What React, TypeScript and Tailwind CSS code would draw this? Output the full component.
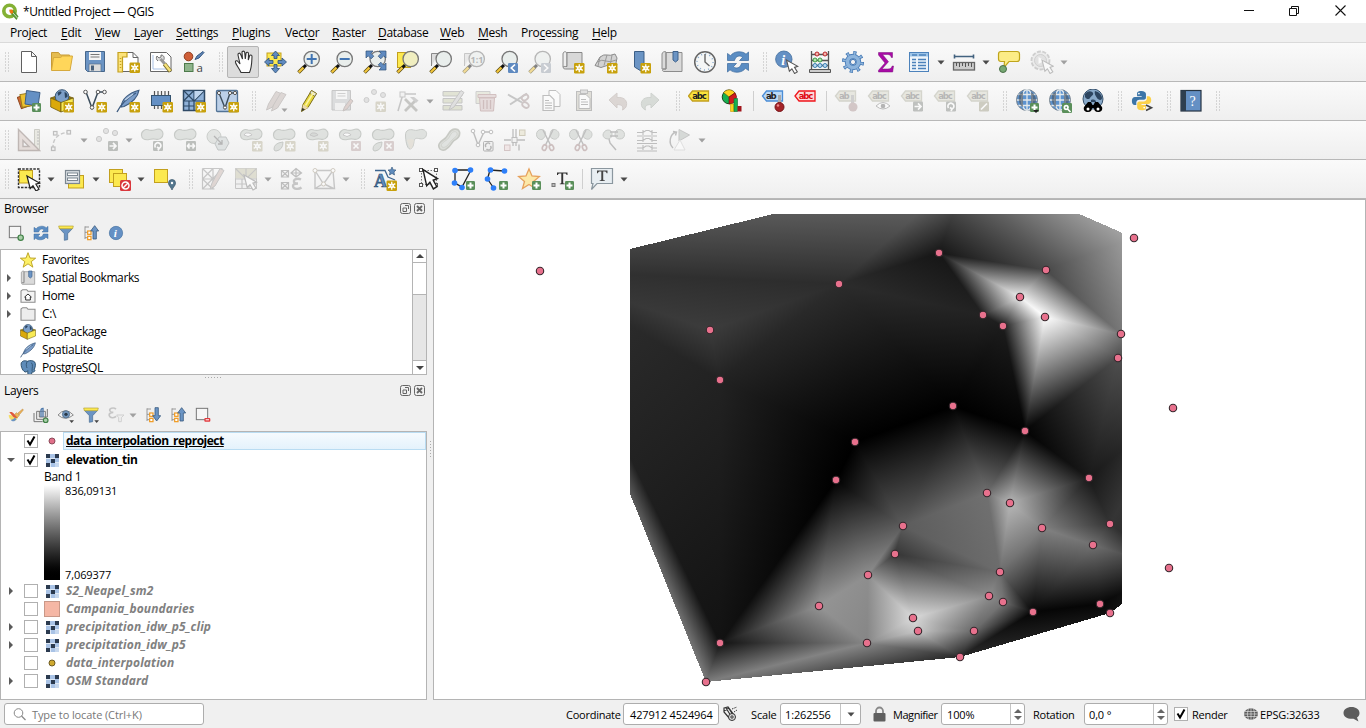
import React from "react";

/* ---------- shared icon parts ---------- */

const Star = ({ x = 13, y = 13, dim = false }: { x?: number; y?: number; dim?: boolean }) => (
  <g>
    <rect x={x} y={y} width="10.500" height="10.500" rx="1.200" fill={dim ? "#bdb8a0" : "#c8a10c"} />
    <g stroke="#fff" strokeWidth="1.300">
      <path d={`M${x + 5.25} ${y + 1.2}v8.100M${x + 1.7} ${y + 3.1}l7.100 4.300M${x + 8.8} ${y + 3.1}l-7.100 4.300`} />
    </g>
    <circle cx={x + 5.25} cy={y + 5.25} r="2.300" fill="#fff" />
    <circle cx={x + 5.25} cy={y + 5.25} r="1" fill={dim ? "#ddd" : "#ecd98a"} />
  </g>
);

const Plus = ({ x = 14, y = 14 }: { x?: number; y?: number }) => (
  <g>
    <rect x={x} y={y} width="9" height="9" rx="1.2" fill="#5a8f5a" />
    <path d={`M${x + 4.5} ${y + 1.5}v6M${x + 1.5} ${y + 4.5}h6`} stroke="#fff" strokeWidth="2" />
  </g>
);

const Badge = ({ d, x = 13, y = 13, fill = "#9b9e9b" }: { d: string; x?: number; y?: number; fill?: string }) => (
  <g>
    <rect x={x} y={y} width="10" height="10" rx="1.2" fill={fill} />
    <path d={d} transform={`translate(${x} ${y})`} stroke="#fff" strokeWidth="1.7" fill="none" />
  </g>
);

const Lens = ({ back, children, glass = "#e9eeec" }: { back?: React.ReactNode; children?: React.ReactNode; glass?: string }) => (
  <g>
    {back}
    <path d="M1.5 22.500L7 17" stroke="#57480f" strokeWidth="3.6" />
    <path d="M1.800 22.200L6.500 17.500" stroke="#f3c63c" strokeWidth="2.2" />
    <path d="M6.600 17.400L9 15" stroke="#111" strokeWidth="3" />
    <circle cx="14.700" cy="9" r="7.700" fill={glass} stroke="#777" strokeWidth="1.300" />
    {children}
  </g>
);

const Dim = ({ children }: { children: React.ReactNode }) => <g opacity="0.5">{children}</g>;

const Globe = () => (
  <g>
    <circle cx="12" cy="11" r="10.500" fill="#5d93cf" stroke="#77828c" />
    <path d="M12 .8v20.400M1.800 11h20.400M3.500 5.500h17M3.500 16.500h17" stroke="#e4e9ec" strokeWidth="1.300" fill="none" />
    <ellipse cx="12" cy="11" rx="5.300" ry="10.300" fill="none" stroke="#e4e9ec" strokeWidth="1.300" />
    <path d="M4 6c1-2 3-3 4-3v15c-3-1-5-6-4-12zM16 3c3 1 5 5 5 8s-2 6-5 7z" fill="#46505a" opacity=".6" />
  </g>
);

const Blob = ({ fill = "#c9cec9" }: { fill?: string }) => (
  <path
    d="M1.500 7.500C1 3.500 5 .5 9 2c3 1 5 0 8-.7 4-.8 6 2 6 4.700 0 4-4 6-7 5.200-4-1-5 .4-8 .6-3.500.2-6-.8-6.500-4.300z"
    fill={fill}
    stroke="#9aa09a"
    strokeWidth="1.100"
  />
);

const Tag = ({ t, fill, stroke, color = "#222" }: { t: string; fill: string; stroke: string; color?: string }) => (
  <g>
    <path d="M1.500 7L5.500 2H21.500V12H5.500z" fill={fill} stroke={stroke} strokeWidth="1.300" />
    <text x={t === "ab" ? 5 : 5.300} y="10" fontSize="8.500" fontWeight="700" fontFamily="DejaVu Sans, Open Sans, sans-serif" fill={color} textLength={t === "ab" ? 10.500 : 14.500}>
      {t}
    </text>
  </g>
);

const Feather = () => (
  <g>
    <path d="M5 18C6 10 13 4 23 1.200 22 7 17 13.500 8 17.500z" fill="#7b9dc9" stroke="#3e5c80" strokeWidth="1.100" />
    <path d="M1 23C4 17 11 9 20 4" stroke="#3e5c80" fill="none" strokeWidth="1.400" />
    <path d="M9 11l8-6" stroke="#c3d5ea" strokeWidth="1.200" />
  </g>
);

const Package = () => (
  <g>
    <path d="M.7 9L12 5l11.300 4L11 13.500z" fill="#9b7c0e" stroke="#6e5b0c" strokeWidth=".8" />
    <circle cx="12" cy="7.500" r="6.800" fill="#7c9fc8" stroke="#3a5876" />
    <path d="M7.500 4c1.500-2 4-2 4-.5s-2 2-3 3.500zM14.500 3c2.500.5 3.500 3 3 5l-2.500 1z" fill="#2c4560" />
    <path d="M.7 9L11 13.500V23L.7 18z" fill="#dba90a" stroke="#6e5b0c" strokeWidth=".8" />
    <path d="M11 13.500L23.300 9v9L11 23z" fill="#f8ea55" stroke="#6e5b0c" strokeWidth=".8" />
  </g>
);

const Refresh = () => (
  <g fill="#5b8dc3" stroke="#3a699c" strokeWidth=".7">
    <path d="M1.500 10.500V3.500l3 2.200C8 1 16 .5 20 4.200L22.500 2v8.500h-9l3-3C14 4.700 9.500 6 8.500 10.500z" />
    <path d="M22.500 13.500v7l-3-2.200C16 23 8 23.500 4 19.800L1.500 22v-8.500h9l-3 3c2.500 2.800 7 1.500 8-3z" />
  </g>
);

const Arrow = ({ x = 2, y = 2, fill = "#fff", stroke = "#222" }: { x?: number; y?: number; fill?: string; stroke?: string }) => (
  <path
    transform={`translate(${x} ${y})`}
    d="M0 0L3.200 12.500 6 9.800l3 5.200 3-1.800-3.100-5L12.500 7z"
    fill={fill}
    stroke={stroke}
    strokeWidth="1.200"
  />
);

const BookmarkBook = () => (
  <g>
    <path d="M2 4c0-2 3-3 4-2v17H2zM6 2.500h16V21.500H4c-2 0-2-2.500 0-2.500h2z" fill="#dadada" stroke="#8c8c8c" />
    <path d="M13 1.500h5V10l-2.500 2L13 10z" fill="#6b94c4" stroke="#3e628c" />
  </g>
);

const InfoDisc = () => (
  <g>
    <circle cx="11" cy="11" r="10" fill="#6490c4" stroke="#44709f" />
    <text x="7.800" y="17.500" fontSize="17" fontStyle="italic" fontWeight="700" fontFamily="Liberation Serif, serif" fill="#fff">
      i
    </text>
  </g>
);

const Tree = ({ down = false }: { down?: boolean }) => (
  <g>
    <path d="M3 2v19M3 3h6M3 11h4M3 19h4" stroke="#8c8c8c" strokeWidth="1.300" fill="none" />
    <rect x="7" y="9" width="5" height="5" fill="#fff" stroke="#f09a20" strokeWidth="1.800" />
    <rect x="7" y="17" width="5" height="5" fill="#fff" stroke="#f09a20" strokeWidth="1.800" />
    <path d={down ? "M15 1h5v12h3.500L17.500 21 11.500 13H15z" : "M15 21h5V9h3.500L17.500 1 11.500 9H15z"} fill="#6b94c4" stroke="#38597e" strokeWidth="1.200" />
  </g>
);

const Filter = () => (
  <g>
    <path d="M2 5h20l-7.500 8v9l-5 1v-10z" fill="#6b94c4" stroke="#46698f" />
    <path d="M1 1.500h22l-1 4H2z" fill="#fce94f" stroke="#b3a238" />
  </g>
);

const Scissors = () => (
  <g>
    <path d="M5 1.500c3 0 5 2 4.500 5s-3 5.500-5 5-4-2-4-5 2-5 4.500-5zM17 1.500c3-.5 6 2 6 5s-3 5.500-5.500 4.500-4-2-3.500-4.500 1-4.700 3-5z" fill="#c6cbc6" stroke="#9ba09b" />
    <path d="M7 2l8 16M17 2L9 18" stroke="#8a8a8a" strokeWidth="1.400" />
    <ellipse cx="8.500" cy="19.500" rx="2" ry="3" transform="rotate(20 8.500 19.500)" fill="none" stroke="#a98d8d" strokeWidth="1.700" />
    <ellipse cx="15.500" cy="19.500" rx="2" ry="3" transform="rotate(-20 15.500 19.500)" fill="none" stroke="#a98d8d" strokeWidth="1.700" />
  </g>
);

/* ---------- icon table (24 x 24 grid) ---------- */

const ICONS: Record<string, React.ReactNode> = {
  newDoc: <path d="M4.500 1.500h10l5 5V22.500H4.500zM14.500 1.500v5h5" fill="#fff" stroke="#606060" />,
  open: (
    <g>
      <path d="M1.500 20V2.500h7l2 2.500h9v4" fill="#e5bc50" stroke="#c79a35" />
      <path d="M1.500 20.500L3.500 7.500h7l2-1.500h10L20 20.500z" fill="#ffd65a" stroke="#d6a93c" />
    </g>
  ),
  save: (
    <g>
      <path d="M2.500 1.500h19V21.500H4.500l-2-2z" fill="#6b94c4" stroke="#46668a" />
      <rect x="6" y="2" width="12" height="8" fill="#f4f4f4" />
      <path d="M7.500 4.500h9M7.500 7h9" stroke="#777" strokeWidth="1.100" />
      <rect x="6" y="14" width="12" height="7.500" fill="#dcdcdc" stroke="#55708e" strokeWidth=".7" />
      <rect x="8" y="15.500" width="3" height="5" fill="#47607c" />
    </g>
  ),
  newLayout: (
    <g>
      <path d="M4 2.500h13l5 5v14H4z" fill="#fff" stroke="#666" />
      <path d="M17 2.500v5h5" fill="none" stroke="#666" />
      <path d="M2 2.500h9v4.500H6.500V22H2z" fill="#fce37a" stroke="#c3a01e" strokeWidth="1.200" />
      <path d="M4.500 8v12" stroke="#c3a01e" strokeWidth="1.500" strokeDasharray="1 2" />
      <Star x={13.500} y={12.500} />
    </g>
  ),
  layoutMgr: (
    <g>
      <path d="M1.500 2.500h16l4.500 4.500v14.500H1.500z" fill="#fff" stroke="#666" />
      <path d="M4 5v14h15" fill="none" stroke="#a9c1e4" />
      <path d="M9 11c-2-1-2-4-1-5l2 2 2-1V5c3 0 4 3 2.500 5.500" fill="#ddd" stroke="#777" />
      <path d="M11.500 9L16 14" stroke="#999" strokeWidth="3" />
      <path d="M15.500 14l6 7.500" stroke="#7a6c2e" strokeWidth="4.200" />
      <path d="M15.700 14l5.600 7" stroke="#f5e27a" strokeWidth="2.600" />
    </g>
  ),
  style: (
    <g>
      <circle cx="6.500" cy="6.500" r="4.300" fill="#cf5f38" stroke="#8f3a1c" />
      <path d="M13 9.500l2-3.500 6-4.500 1 1-5 5.500z" fill="#5f86b8" stroke="#355782" />
      <rect x="2.500" y="13.500" width="8.500" height="8" fill="#8fb48c" stroke="#4c7a4a" />
      <text x="14.500" y="21.500" fontSize="11.500" fontFamily="Open Sans, sans-serif" fill="#444">a</text>
    </g>
  ),
  hand: (
    <path
      d="M9 22.500C7 18 4.500 15.500 3.500 12.500c-.5-1.700 1.500-2.400 2.500-1l2 2.500L6 5c-.3-2 2-2.500 2.600-.7L10.500 9 10 2.500C10 .7 12.500.7 12.700 2.500L13.300 9 14 3.500c.2-1.800 2.500-1.500 2.500.3L16.300 10l1.200-4c.5-1.700 2.600-1.200 2.500.5C19.700 12 20 17 17.500 22.500z"
      fill="#fff"
      stroke="#333"
      strokeWidth="1.100"
    />
  ),
  pan: (
    <g>
      <rect x="3" y="3" width="14" height="13" fill="#fce94f" stroke="#c3a01e" />
      <path d="M11.500 1L15.500 5.500H13v3h-3v-3H7.500zM11.500 23l4-4.500H13v-4h-3v4H7.500zM.5 12l4.500-4v2.500h4v3H5V16zM22.500 12L18 8v2.500h-4v3h4V16z" fill="#5f8ac0" stroke="#2f5279" strokeWidth=".8" />
    </g>
  ),
  zoomIn: <Lens><path d="M14.700 4v10M9.700 9h10" stroke="#4275b3" strokeWidth="2" /></Lens>,
  zoomOut: <Lens><path d="M9.700 9h10" stroke="#4275b3" strokeWidth="2" /></Lens>,
  zoomFull: (
    <Lens>
      <path d="M3 1h7L7.800 3.200l3 3-2.600 2.600-3-3L3 8zM23 1v7l-2.200-2.200-3 3-2.600-2.600 3-3L16 1zM23 20h-7l2.200-2.200-3-3 2.600-2.600 3 3L23 13z" fill="#5f8ac0" stroke="#2f5279" strokeWidth=".7" />
    </Lens>
  ),
  zoomSel: (
    <Lens back={<rect x="1.500" y="2.500" width="13" height="15" fill="#fce94f" stroke="#c3a01e" />} glass="#f0eec0" />
  ),
  zoomLayer: <Lens back={<path d="M2.500 16V3.500h7" fill="#ddd" stroke="#888" />} />,
  zoomNative: (
    <Dim>
      <Lens back={<path d="M2.500 16V3.500h7" fill="#ddd" stroke="#999" />}>
        <text x="8.500" y="12.500" fontSize="9" fontWeight="700" fontFamily="Open Sans, sans-serif" fill="#777">1:1</text>
      </Lens>
    </Dim>
  ),
  zoomLast: <Lens><Badge x={13} y={13} fill="#5f8ac0" d="M7 1.500L3.300 5l3.700 3.500" /></Lens>,
  zoomNext: <Dim><Lens><Badge x={13} y={13} fill="#9fa8b3" d="M3 1.500L6.700 5 3 8.500" /></Lens></Dim>,
  newMap: (
    <g>
      <path d="M2 4c0-3 4-3 4 0v13H2z" fill="#eee" stroke="#888" />
      <path d="M6 2.500h15V19H4.500C1.500 19 1.500 16 4.500 16.500H6z" fill="#d8d8d8" stroke="#888" />
      <Star x={13} y={13} />
    </g>
  ),
  new3d: (
    <g>
      <path d="M1 15.500L6 7q4-3 7-2t8-1l2 4-2 10-8-2.500-6 2z" fill="#d3d3d3" stroke="#8b8b8b" />
      <path d="M3 12q5-3 9-1t10-1M6 7l-2 9M13 5l-3 10.500M18 5l-2 11" fill="none" stroke="#999" />
      <Star x={13} y={13} />
    </g>
  ),
  newBm: (
    <g>
      <path d="M7.500 1.500h9.500V17l-3 4-6.500-4z" fill="#6b94c4" stroke="#3c5f87" />
      <Star x={13.500} y={13} />
    </g>
  ),
  bm: <BookmarkBook />,
  clock: (
    <g>
      <circle cx="12" cy="12" r="10.300" fill="#f4f6f6" stroke="#666" strokeWidth="1.500" />
      <circle cx="12" cy="12" r="8" fill="none" stroke="#88aacd" strokeWidth="1.500" strokeDasharray="1 3.190" />
      <path d="M12 4v8l4.500 4" fill="none" stroke="#666" strokeWidth="1.400" />
    </g>
  ),
  refresh: <Refresh />,
  identify: (
    <g>
      <g transform="translate(-.2 .2) scale(.82)"><InfoDisc /></g>
      <g transform="translate(11.500 10) scale(.9)"><Arrow x={0} y={0} stroke="#555" /></g>
    </g>
  ),
  abacus: (
    <g>
      <path d="M3.500 1v20M20.500 1v20M3.500 4.500h17M3.500 10.500h17M3.500 15.500h17" stroke="#555" strokeWidth="1.300" />
      <path d="M1.500 19.500h21v3h-21z" fill="#ccc" stroke="#555" />
      <g fill="#f6b3ab" stroke="#b9262b"><circle cx="9" cy="4" r="2" /><circle cx="17" cy="4" r="2" /></g>
      <g fill="#b8e3b0" stroke="#3c9b46"><circle cx="7" cy="10" r="2" /><circle cx="12" cy="10" r="2" /></g>
      <g fill="#b8d8f0" stroke="#3b7fb2"><circle cx="7" cy="15.500" r="2" /><circle cx="12" cy="15.500" r="2" /><circle cx="17" cy="15.500" r="2" /></g>
    </g>
  ),
  gear: (
    <g>
      <circle cx="12" cy="12" r="8.800" fill="none" stroke="#4679b4" strokeWidth="4.500" strokeDasharray="3 3.910" />
      <circle cx="12" cy="12" r="5.500" fill="none" stroke="#4a7db8" strokeWidth="5.500" />
      <circle cx="12" cy="12" r="5.500" fill="none" stroke="#8db4dc" strokeWidth="3.600" />
      <circle cx="12" cy="12" r="8.800" fill="none" stroke="#8db4dc" strokeWidth="3" strokeDasharray="1.600 5.310" strokeDashoffset="-.7" />
      <circle cx="12" cy="12" r="2.600" fill="#f4f4f4" stroke="#4679b4" />
    </g>
  ),
  sigma: <path d="M4.500 2.500h14v5h-1.200c-.5-2-1.500-3-3.500-3H8.500l6 7.200-6.500 7.300h6c2.500 0 3.500-1 4.200-3h1.300l-.8 6H4.500v-1.700l6.500-7.300-6.500-8z" fill="#a90aa6" stroke="#77107a" strokeWidth=".5" />,
  table: (
    <g>
      <rect x="2.500" y="2.500" width="19" height="19" fill="#eef4fa" stroke="#4c82bb" />
      <path d="M3 3h18v3.500H3z" fill="#9dc4e8" />
      <path d="M5 5h5M12 5h7M5 9.500h4M11 9.500h8M5 12.500h4M11 12.500h8M5 15.500h4M11 15.500h8M5 18.500h4M11 18.500h8" stroke="#4c82bb" strokeWidth="1.300" />
    </g>
  ),
  measure: (
    <g>
      <path d="M2 6.500h20M2.500 4.500v4M21.500 4.500v4" stroke="#42627f" strokeWidth="1.600" />
      <rect x="1.500" y="12.500" width="21" height="7.500" fill="#ccc" stroke="#666" strokeWidth="1.300" />
      <path d="M4.500 13v3M7.500 13v4M10.500 13v3M13.500 13v4M16.500 13v3M19.500 13v4" stroke="#555" />
    </g>
  ),
  tip: (
    <g>
      <path d="M4 1.500h16q2.500 0 2.500 2.500v5q0 2.500-2.500 2.500h-8l-5 6 .5-6H4Q1.500 11.500 1.500 9V4Q1.500 1.500 4 1.500z" fill="#fcec86" stroke="#bfa51c" strokeWidth="1.200" />
      <circle cx="6" cy="19" r="3.500" fill="#76a873" stroke="#4a6f48" />
    </g>
  ),
  runAction: (
    <Dim>
      <circle cx="10.500" cy="10.500" r="9" fill="#e2e2e2" stroke="#a8a8a8" strokeWidth="1.800" strokeDasharray="4 1.500" />
      <circle cx="10.500" cy="10.500" r="6" fill="#cfcfcf" stroke="#aaa" />
      <path d="M8.500 7l6 3.500-6 3.500z" fill="#fff" />
      <g transform="translate(12 10) scale(.9)"><Arrow x={0} y={0} stroke="#888" /></g>
    </Dim>
  ),

  dataSrc: (
    <g>
      <rect x="2" y="6" width="12" height="12" transform="rotate(-20 8 12)" fill="#d16a35" stroke="#8f4a22" />
      <rect x="4" y="4.500" width="13" height="13" transform="rotate(-10 10 11)" fill="#ecc02f" stroke="#9a7b16" />
      <path d="M9.500 1.500l13.500 2-2 13.500-13-2z" fill="#6490c4" stroke="#3d5f88" />
      <Plus x={15} y={14} />
    </g>
  ),
  gpkg: <g><Package /><Star x={13.500} y={13} /></g>,
  shp: (
    <g>
      <path d="M3 3l6 16 6-16h6" fill="none" stroke="#3c4d5c" strokeWidth="1.500" />
      <g fill="#fff" stroke="#555"><circle cx="2.500" cy="3" r="1.800" /><circle cx="15" cy="3" r="1.800" /><circle cx="21.500" cy="3" r="1.800" /><circle cx="9" cy="18.500" r="1.800" /></g>
      <Star x={13.500} y={13} />
    </g>
  ),
  spatialite: <g><Feather /><Star x={13.500} y={13} /></g>,
  memory: (
    <g>
      <path d="M5.500 2v18M9 2v18M12.500 2v18M16 2v18M19.500 2v8" stroke="#555" strokeWidth="1.200" />
      <rect x="2.500" y="6.500" width="19" height="10" fill="#6490c4" stroke="#34536f" />
      <Star x={13.500} y={13} />
    </g>
  ),
  mesh: (
    <g>
      <path d="M1.500 1.500h21v20h-21z" fill="#8fb1d8" stroke="#2f4a66" strokeWidth="1.500" />
      <path d="M1.500 12h21M12 1.500v20M1.500 1.500L12 12M12 1.500L1.500 12M12 12L22.500 1.500M1.500 17H12M7 12v10" stroke="#2f4a66" fill="none" strokeWidth="1.200" />
      <path d="M12.500 2v9l9-9z" fill="#c1d6ee" />
      <Star x={13.500} y={13} />
    </g>
  ),
  virtual: (
    <g>
      <rect x="1.500" y="1.500" width="21" height="21" rx="1" fill="#bcd0e8" stroke="#527396" strokeWidth="1.300" />
      <path d="M4 4l6 15 5-15h5" fill="none" stroke="#3c4d5c" strokeWidth="1.400" />
      <g fill="#fff" stroke="#555"><circle cx="4" cy="4" r="1.600" /><circle cx="15" cy="4" r="1.600" /><circle cx="20" cy="4" r="1.600" /><circle cx="10" cy="18.500" r="1.600" /></g>
      <Star x={13.500} y={13} />
    </g>
  ),
  edits: (
    <Dim>
      <path d="M2.500 21l2-6L12 2.500l5 2L8.500 18z" fill="#c4b8b4" stroke="#a39c99" />
      <path d="M7.500 22l2-6L17 3.500l5 2-8.500 13.500z" fill="#c4b8b4" stroke="#a39c99" />
      <path d="M17.500 19.500h6l-3 3.500z" fill="#555" />
    </Dim>
  ),
  pencil: (
    <g>
      <path d="M4.500 22.500l1.500-7L14.500 1.500l5 3L11 18.500z" fill="#e7d83c" stroke="#7c6d1d" />
      <path d="M14.500 1.500l5 3-1.700 2.800-5-3z" fill="#e8e8e0" stroke="#7c6d1d" strokeWidth=".8" />
      <path d="M8.500 16.500l8-13" stroke="#fbf3a0" strokeWidth="1.600" />
      <path d="M4.500 22.500l1-4 2.500 1.500z" fill="#333" />
      <path d="M6 15.500l5 3-2.500 2-3-1.500z" fill="#ead9b0" />
    </g>
  ),
  saveEdits: (
    <Dim>
      <path d="M2 1.500h18.500V21H2z" fill="#c3c5c7" stroke="#9a9a9a" />
      <rect x="6" y="2" width="11" height="8" fill="#f6f6f6" />
      <path d="M7.500 4.500h8M7.500 7h8" stroke="#aaa" />
      <rect x="5" y="14" width="10" height="7" fill="#eee" />
      <path d="M13 22l1.500-4 6-8 2.500 2-6 8z" fill="#c9b0aa" stroke="#9c9290" />
    </Dim>
  ),
  addPoint: (
    <Dim>
      <g fill="#cfcfcf" stroke="#a5a5a5"><circle cx="3.500" cy="11" r="2.500" /><circle cx="11" cy="3" r="2.500" /><circle cx="20" cy="6" r="2.500" /></g>
      <Star x={12.500} y={12.500} dim />
    </Dim>
  ),
  vertex: (
    <Dim>
      <path d="M2 22L7 5h13" fill="none" stroke="#999" strokeWidth="1.500" />
      <rect x="4" y="3" width="5" height="5" fill="#eee" stroke="#999" />
      <path d="M9 10l12 12M20 11L9 22" stroke="#9a9a95" strokeWidth="2.800" />
      <path d="M14 8l6 6 2.500-2.500L18 8z" fill="#aaa" />
    </Dim>
  ),
  multiEdit: (
    <Dim>
      <path d="M2 2.500h19v4.500H2zM2 9.500h19V14H2zM2 16.500h19V21H2z" fill="#cdd1b4" stroke="#999" />
      <path d="M8 21l2-5L20 1.500l3 2L13 18z" fill="#ccc" stroke="#999" />
    </Dim>
  ),
  del: (
    <Dim>
      <path d="M2 2.500h14v12H2z" fill="#dadcc8" stroke="#aaa" />
      <path d="M4 5.500h18v3H4zM5.500 9h15l-1 13h-13z" fill="#d8c4c4" stroke="#b08c8c" />
      <path d="M9.500 11v9M13 11v9M16.500 11v9" stroke="#a88" strokeWidth="1.300" />
    </Dim>
  ),
  cut: (
    <Dim>
      <path d="M1 5.500l14 8M3 15.500L20 4.500" stroke="#999" strokeWidth="2" />
      <ellipse cx="18" cy="8.500" rx="3.500" ry="2.500" transform="rotate(-30 18 8.500)" fill="none" stroke="#a99" strokeWidth="1.800" />
      <ellipse cx="18.500" cy="16" rx="3.500" ry="2.500" transform="rotate(35 18.500 16)" fill="none" stroke="#a99" strokeWidth="1.800" />
    </Dim>
  ),
  copy: (
    <Dim>
      <path d="M9 1.500h7l4 4v12H9z" fill="#fff" stroke="#888" />
      <path d="M3 6.500h7l4 4v11H3z" fill="#fff" stroke="#888" strokeWidth="1.200" />
      <path d="M5 11.500h4M5 14h7M5 16.500h7M5 19h7" stroke="#888" />
    </Dim>
  ),
  paste: (
    <Dim>
      <rect x="3.500" y="2.500" width="15" height="19" fill="#ccc9bd" stroke="#888" />
      <rect x="7.500" y="1" width="7" height="3.500" fill="#ccc" stroke="#888" />
      <path d="M6 5.500h7l4 4v10H6z" fill="#fff" stroke="#888" />
      <path d="M8 10.500h5M8 13h7M8 15.500h7" stroke="#888" />
    </Dim>
  ),
  undo: <Dim><path d="M3 11L11 4v4.500c6-.5 10.500 2 9.500 8-.5 2-1.500 3-4 4.500 1-3 0-5.500-5.500-5.500V19z" fill="#c4b9b4" stroke="#b3a8a3" /></Dim>,
  redo: <Dim><path d="M20 11L12 4v4.500c-6-.5-10.500 2-9.500 8 .5 2 1.500 3 4 4.500-1-3 0-5.500 5.500-5.500V19z" fill="#bcc4bc" stroke="#a9b0a9" /></Dim>,
  abcY: <g transform="translate(-1 0)"><Tag t="abc" fill="#fbe43c" stroke="#c3a01e" /></g>,
  pie: (
    <g transform="translate(0 0)">
      <circle cx="8" cy="8" r="6.800" fill="#18b04f" stroke="#174a22" />
      <path d="M8 8L2.500 3.500A7 7 0 0 1 14 4z" fill="#ffd21d" stroke="#63520a" strokeWidth=".6" />
      <path d="M8 8l6-4.200A7 7 0 0 1 8 15z" fill="#d01b1d" stroke="#5c0a0a" strokeWidth=".6" />
      <path d="M9.500 15h3.500v7.500H9.500z" fill="#ffd21d" stroke="#c89a00" strokeWidth=".6" />
      <path d="M13 9.500h3.500v13H13z" fill="#18b04f" stroke="#0c6e2f" strokeWidth=".6" />
      <path d="M16.500 17H20.500v5.500h-4z" fill="#a0151b" />
    </g>
  ),
  abPin: (
    <g>
      <Tag t="ab" fill="#bcd9f6" stroke="#4b8dd6" />
      <path d="M18.500 6v8" stroke="#aaa" strokeWidth="3" />
      <circle cx="18.500" cy="18" r="4.500" fill="#a52328" stroke="#761418" />
      <circle cx="17" cy="16.500" r="1.200" fill="#e88" />
    </g>
  ),
  abcR: <g transform="translate(-.5 0)"><Tag t="abc" fill="#fbd9d9" stroke="#f0151b" color="#e00910" /></g>,
  abD: <Dim><Tag t="ab" fill="#d8d8ca" stroke="#b4b4a4" color="#777" /><path d="M18.500 6v8" stroke="#aaa" strokeWidth="3" /><circle cx="19" cy="18" r="4.500" fill="#b49c9c" /></Dim>,
  abcEye: <Dim><Tag t="abc" fill="#d8d8ca" stroke="#b4b4a4" color="#777" /><path d="M9 17q7-7 14 0-7 6-14 0z" fill="#fff" stroke="#888" /><circle cx="16" cy="17" r="2.300" fill="#777" /></Dim>,
  abcMove: <Dim><Tag t="abc" fill="#d8d8ca" stroke="#b4b4a4" color="#777" /><Badge x={13} y={12.500} fill="#8b8f8b" d="M1.500 5h6M5 1.800L8 5 5 8.200" /></Dim>,
  abcRot: <Dim><Tag t="abc" fill="#d8d8ca" stroke="#b4b4a4" color="#777" /><Badge x={13} y={12.500} fill="#8b8f8b" d="M2.500 6.500A3 3 0 1 1 6 7.500L4 6M6 7.500L5 9.500" /></Dim>,
  abcEdit: <Dim><Tag t="abc" fill="#d8d8ca" stroke="#b4b4a4" color="#777" /><Badge x={13} y={12.500} fill="#a8a690" d="M2 8L8 2" /></Dim>,
  globeAdd: <g><Globe /><Plus x={15} y={14} /><path d="M18 21h6l-3 3z" fill="#222" /></g>,
  globeFind: <g><Globe /><Badge x={14} y={14} fill="#5a8f5a" d="M6 4.500a1.800 1.800 0 1 0-3.600 0 1.800 1.800 0 1 0 3.600 0M5.500 6l3 3" /></g>,
  metasearch: (
    <g>
      <circle cx="12" cy="10" r="10" fill="#88a9c9" stroke="#35506b" />
      <path d="M4 5c3-4 7-3 8-1s-2 3-3 5-4 1-5-1zM14 2c4 1 7 4 7 7s-4 2-5 0-3-4-2-7zM10 11c3-1 5 0 5 2h-5z" fill="#2d4560" />
      <path d="M7 13h3l1.500 3h1L14 13h3l4 5c1 3-1 5-4 5s-4-2-4-4h-2c0 2-1 4-4 4s-5-2-4-5z" fill="#000" />
      <circle cx="7" cy="20" r="1.500" fill="#fff" /><circle cx="17" cy="20" r="1.500" fill="#fff" />
    </g>
  ),
  python: (
    <g>
      <g transform="translate(1 1) scale(.88)">
        <path d="M11.900 1c-5 0-5 2-5 3.500V7h5.200v1H4.500C2.500 8 1 9.700 1 12.500S2.400 17 4 17h2v-2.700C6 12.300 7.600 11 9.500 11h5c1.700 0 2.500-1.200 2.500-2.600V4.500C17 2.500 15 1 11.900 1z" fill="#3c75a8" />
        <path d="M11.900 1c-5 0-5 2-5 3.500V7h5.200v1H4.500C2.500 8 1 9.700 1 12.500S2.400 17 4 17h2v-2.700C6 12.300 7.600 11 9.500 11h5c1.700 0 2.500-1.200 2.500-2.600V4.500C17 2.500 15 1 11.900 1z" fill="#fbd14a" transform="rotate(180 12 12)" />
        <circle cx="9" cy="4" r="1" fill="#fff" /><circle cx="15" cy="20" r="1" fill="#fff" />
      </g>
      <path d="M16 16l5.500 2.700L16 21.500" fill="none" stroke="#444" strokeWidth="1.600" />
    </g>
  ),
  help: (
    <g>
      <rect x="2" y="1.500" width="20" height="20.500" fill="#6490c4" stroke="#253341" strokeWidth="1.200" />
      <rect x="2" y="1.500" width="5" height="20.500" fill="#2e3f50" />
      <text x="10.500" y="17" fontSize="14" fontFamily="Liberation Serif, serif" fill="#fff">?</text>
    </g>
  ),

  ruler: (
    <Dim>
      <path d="M17.500 1.500h5v20h-5z" fill="#dcdccf" stroke="#a3a396" />
      <path d="M20 4h2M20 7h2M20 10h2M20 13h2M20 16h2" stroke="#888" />
      <path d="M1.500 1.500v21h21zM6 12.500v6h6z" fillRule="evenodd" fill="#d8c8c2" stroke="#8b7b76" strokeWidth="1.400" />
    </Dim>
  ),
  curve: (
    <Dim>
      <path d="M3 21Q2 6 19 4" fill="none" stroke="#999" strokeWidth="1.400" strokeDasharray="4 2" />
      <g fill="#eee" stroke="#888" strokeWidth="1.200"><rect x="1.500" y="19" width="3.500" height="3.500" /><rect x="3.500" y="3.500" width="3.500" height="3.500" /><rect x="17" y="2.500" width="3.500" height="3.500" /></g>
    </Dim>
  ),
  movePt: (
    <Dim>
      <g fill="#cfcfcf" stroke="#a0a0a0"><circle cx="4" cy="11" r="2.600" /><circle cx="11" cy="3" r="2.600" /><circle cx="20" cy="5" r="2.600" /></g>
      <Badge d="M1.500 5h6M5 1.800L8 5 5 8.200" fill="#868b86" />
    </Dim>
  ),
  rotF: <Dim><Blob /><Badge d="M2.500 6.500A3 3 0 1 1 6 7.500L4 6M6 7.500L5 9.500" fill="#868b86" /></Dim>,
  scaleF: <Dim><Blob /><Badge d="M1.500 5h7M3.500 2.500L1.500 5l2 2.500M6.500 2.500l2 2.500-2 2.500" fill="#868b86" /></Dim>,
  simplify: (
    <Dim>
      <circle cx="8" cy="8.500" r="7" fill="#d0d4d0" stroke="#a2a8a2" />
      <path d="M10 16l4-7h7l3 6-4 7h-7z" fill="#ccd3d3" stroke="#939a9a" transform="translate(-1 0)" />
      <path d="M8 8l8 8M16 12v4h-4" fill="none" stroke="#777" strokeWidth="1.300" />
    </Dim>
  ),
  ring: <Dim><Blob /><path d="M5 7q1-3 5-2 3 1 3 2-4 3-8 0z" fill="#fff" stroke="#999" /><Star x={13} y={13} dim /></Dim>,
  part: <Dim><Blob /><path d="M2 21q0-6 9-7 0 8-7 9-2 0-2-2z" fill="#c9cec9" stroke="#9aa09a" /><Star x={13} y={13} dim /></Dim>,
  fillRing: <Dim><Blob /><path d="M5 7q1-3 5-2 3 1 3 2-4 3-8 0z" fill="#b8bdb8" stroke="#999" /><Star x={13} y={13} dim /></Dim>,
  delRing: <Dim><Blob /><path d="M5 7q1-3 5-2 3 1 3 2-4 3-8 0z" fill="#fff" stroke="#999" /><Badge d="M2.500 2.500l5 5M7.500 2.500l-5 5" fill="#bfaaaa" /></Dim>,
  delPart: <Dim><Blob /><path d="M2 21q0-6 9-7 0 8-7 9-2 0-2-2z" fill="#c9cec9" stroke="#9aa09a" /><Badge d="M2.500 2.500l5 5M7.500 2.500l-5 5" fill="#bfaaaa" /></Dim>,
  reshape: <Dim><path d="M1.500 7c0-5 4-6 8-5 3 1 4 0 7-.5 4-.5 6.500 2 6 5-.5 4-4 5-8 4-3-.5-4 0-4.500 3-.5 5-2 7-4 7.500-3 0-4.500-9-4.500-14z" fill="#c9cec9" stroke="#9aa09a" /><path d="M3 12c3-1.500 5-1 7 0-1 6-2 9-4 9z" fill="#d6cfc0" /></Dim>,
  offset: <Dim><path d="M3 21c-3-4 0-7 3-9 4-2 4-4 6-7 3-5 9-5 10.500-1 1 5-3 7-6 9-2 2-3 5-6 7-2 2-5 3-7.500 1z" fill="#c6cac2" stroke="#9b9f94" strokeWidth="1.600" /><path d="M5 19c-2-3 1-4 3-6 4-2 4-4 6-7 2-3 5-3 6-1 1 3-2 4-5 7-2 2-3 4-5 6-2 1-3 2-5 1z" fill="#cdd2cd" stroke="#aeb2a8" /></Dim>,
  splitF: (
    <Dim>
      <path d="M3 3l5 14 6-13h8" fill="none" stroke="#888" strokeWidth="1.400" />
      <g fill="#fff" stroke="#888"><circle cx="3" cy="3" r="1.800" /><circle cx="13" cy="4" r="1.800" /><circle cx="21" cy="4" r="1.800" /><circle cx="8" cy="17" r="1.800" /></g>
      <rect x="13.500" y="13.500" width="9.500" height="9.500" rx="1" fill="#eee" stroke="#777" /><path d="M16 19a2.500 2.500 0 0 1 4-3M20.500 18a2.500 2.500 0 0 1-4 3" stroke="#777" fill="none" strokeWidth="1.300" />
    </Dim>
  ),
  mergeF: (
    <Dim>
      <path d="M1 12h7M14 12h8M10 1v9M13 1v9M10 14v4M13 14v4" stroke="#888" strokeWidth="1.300" />
      <rect x="9" y="9.500" width="5" height="5" fill="#eee" stroke="#888" />
      <rect x="16.500" y="2" width="5.500" height="5.500" fill="#e4dfc4" stroke="#aaa182" /><rect x="1.500" y="17" width="5.500" height="5.500" fill="#f0dcdc" stroke="#b89a9a" /><rect x="15" y="16.500" width="2" height="6" fill="#aaa" />
    </Dim>
  ),
  sciss1: <Dim><Scissors /></Dim>,
  sciss2: <Dim><Scissors /></Dim>,
  join: <Dim><path d="M6 2c3 0 4 2 4 4s-1 5-4 5-5-2-5-4 2-5 5-5zM17 1.500c3 0 5.500 2 5.500 5s-2 4.500-5 4.500-4.500-2-4.500-4.500 1-5 4-5z" fill="#c9cec9" stroke="#9ba09b" /><path d="M8 4h8M8 8h8" stroke="#888" strokeWidth="1.500" /><path d="M7 11l1 4 6 7" stroke="#888" strokeWidth="1.400" fill="none" /></Dim>,
  merge3: <Dim><path d="M2 4.500h6l3-2h3l3 2h5M2 8h20M2 12.500h6l3-2h3l3 2h5M2 15.500h20M2 20h6l3-2h3l3 2h5M2 23h20M8 2v5M17 2v5M8 9v5M17 9v5M8 17v5M17 17v5" stroke="#888" strokeWidth="1.100" /></Dim>,
  rotPt: <Dim><path d="M11 1.500l10.500 5.500-10.500 6z" fill="#b7beb9" stroke="#999" /><path d="M5 20C0 15 2 6 8 4M5 3.500l3.500.5-1 3.500" fill="none" stroke="#888" strokeWidth="1.400" /><path d="M12 12l5 10H6z" fill="#fff" stroke="#ccc" /></Dim>,

  select: (
    <g>
      <rect x="1.500" y="2" width="21" height="18.500" fill="none" stroke="#333" strokeWidth="1.400" strokeDasharray="2.500 1.200" />
      <rect x="2.500" y="3.500" width="13" height="12.500" fill="#fce94f" stroke="#c3a01e" />
      <Arrow x={10} y={9} />
    </g>
  ),
  form: (
    <g>
      <rect x="6.500" y="8.500" width="15" height="12.500" fill="#fce94f" stroke="#c3a01e" />
      <rect x="3.500" y="3.500" width="14" height="13" fill="#d9dee3" stroke="#7c8791" strokeWidth="1.200" />
      <rect x="5.500" y="6" width="10" height="2.500" fill="#fff" stroke="#7c8791" /><rect x="5.500" y="11" width="10" height="2.500" fill="#fff" stroke="#7c8791" />
    </g>
  ),
  desel: (
    <g>
      <rect x="2.500" y="2.500" width="13" height="13" fill="#fce94f" stroke="#c3a01e" />
      <rect x="6.500" y="6.500" width="13" height="13" fill="#fce94f" stroke="#c3a01e" />
      <rect x="13" y="13" width="11" height="11" rx="1.500" fill="#d9373c" />
      <circle cx="18.500" cy="18.500" r="3.500" fill="none" stroke="#fff" strokeWidth="1.500" /><path d="M16 21l5-5" stroke="#fff" strokeWidth="1.500" />
    </g>
  ),
  selLoc: (
    <g>
      <rect x="2.500" y="2.500" width="13" height="13" fill="#fce94f" stroke="#c3a01e" />
      <path d="M20 23c-1-3-3.500-4-3.500-7a3.500 3.500 0 0 1 7 0c0 3-2.500 4-3.500 7z" fill="#55788f" stroke="#38556a" strokeWidth=".7" /><circle cx="20" cy="16" r="1.200" fill="#fff" />
    </g>
  ),
  meshEdit: <Dim><path d="M1.500 1.500h20M1.500 1.500v20.500h12M1.500 12h14M12 1.500v20.500M1.500 1.500L12 12M12 1.500L1.500 12M21.500 2L1.500 22M1.500 12L12 22" fill="none" stroke="#999" strokeWidth="1.200" /><path d="M9 22l2-6L19 1.500l4 2L14 19z" fill="#cbb9b3" stroke="#999" /></Dim>,
  meshSel: <Dim><path d="M1.500 1.500h21v20h-21z" fill="#eee" stroke="#999" /><path d="M1.500 1.500h21v10h-21z" fill="#c9c7ae" /><path d="M1.500 12h21M8 12v10M15 12v10M1.500 17h21M1.500 1.500L12 12 22.500 1.500M12 1.500V12" stroke="#999" fill="none" strokeWidth="1.200" /><Arrow x={10} y={8} stroke="#888" /></Dim>,
  meshCalc: <Dim><path d="M2.500 3.500h7v6.500h-7zM2.500 3.500l7 6.500M9.500 3.500L2.500 10M2.500 15.500h7V22h-7zM2.500 15.500l7 6.500M9.500 15.500L2.500 22M17 1.500l5.500 4.500-5.500 4-5-4zM17 1.500V10M12 6h10.500" fill="none" stroke="#888" strokeWidth="1.200" /><path d="M22 12.500c-3-1.500-8-.5-7 2.500.5 1 2 1.500 4 1.500-3.500 0-5.500 1-5 3 .7 3 6 3 8.500 1" fill="none" stroke="#999" strokeWidth="2.300" /></Dim>,
  meshTri: <Dim><path d="M3 3.500h18L11.500 17zM3 3.500v18h19.500L21 3.500M3 21.500l8.500-5 10 5" fill="none" stroke="#999" strokeWidth="1.400" /><g fill="#fff" stroke="#aaa08c"><circle cx="3" cy="3.500" r="2" /><circle cx="21" cy="3.500" r="2" /><circle cx="11.500" cy="17" r="2" /></g></Dim>,
  annoLayer: (
    <g>
      <path d="M2 3.500h10l3 6.500 7 3" fill="none" stroke="#3e6690" strokeWidth="1.300" />
      <text x="1" y="19.500" fontSize="18" fontWeight="700" fontFamily="Liberation Serif, serif" fill="#5e8bbd" stroke="#2d5175" strokeWidth=".7">A</text>
      <path d="M19 0l1.200 2.700 2.800.3-2 2 .5 3L19 6.500 16.500 8l.5-3-2-2 2.800-.3z" fill="#5e8bbd" stroke="#2d5175" strokeWidth=".6" />
      <Star x={13.500} y={13.500} />
    </g>
  ),
  annoEdit: (
    <g>
      <rect x="3.500" y="3.500" width="15" height="14" fill="none" stroke="#777" strokeDasharray="1.500 1.500" />
      <g fill="#fff" stroke="#555"><rect x="1.500" y="1.500" width="3" height="3" /><rect x="16.500" y="1.500" width="3" height="3" /><rect x="1.500" y="16.500" width="3" height="3" /><rect x="16.500" y="16.500" width="3" height="3" /></g>
      <g transform="translate(5 2.500) scale(1.150 1.300)"><Arrow x={0} y={0} /></g>
    </g>
  ),
  annoPoly: (
    <g>
      <path d="M4 3h16l-9 17-7-4z" fill="none" stroke="#222" strokeWidth="1.300" />
      <g fill="#2d7ff9"><circle cx="4" cy="3.500" r="2.800" /><circle cx="19.500" cy="3" r="2.800" /><circle cx="3.500" cy="16" r="2.800" /><circle cx="11" cy="20.500" r="2.800" /></g>
      <Plus x={15} y={14} />
    </g>
  ),
  annoLine: (
    <g>
      <path d="M20 4L6 3 3.500 12 9 20" fill="none" stroke="#222" strokeWidth="1.300" />
      <g fill="#2d7ff9"><circle cx="6.500" cy="3" r="2.800" /><circle cx="20.500" cy="4" r="2.800" /><circle cx="3.500" cy="12" r="2.800" /><circle cx="9.500" cy="21" r="2.800" /></g>
      <Plus x={15} y={14} />
    </g>
  ),
  annoStar: (
    <g>
      <path d="M12 2l3 7 7.500.5-6 5 2 7-6.500-4-6.500 4 2-7-6-5L9 9z" fill="#fce8a8" stroke="#e6a15c" strokeWidth="1.300" />
      <Plus x={15} y={14} />
    </g>
  ),
  annoText: (
    <g>
      <path d="M7 5.500h10.500V8h-.9c-.3-1-.9-1.400-2.100-1.400H13.200V15.500c0 1 .5 1.100 1.500 1.100v.6H9.800v-.6c1 0 1.500-.1 1.500-1.100V6.600H10C8.800 6.600 8.200 7 7.900 8H7z" fill="#333" />
      <rect x="2" y="16.500" width="3" height="3" fill="#bbb" stroke="#777" />
      <Plus x={15} y={14} />
    </g>
  ),
  annoBalloon: (
    <g>
      <path d="M1.500 1.500h21v15H7l-5.500 6 1.500-6H1.500z" fill="#e8eef2" stroke="#8b979f" strokeWidth="1.200" />
      <path d="M7 3.500h10.500v2.800h-.9c-.3-1.200-.9-1.700-2.300-1.700h-1.100v7.600c0 1 .6 1.100 1.600 1.100v.7H9.700v-.7c1 0 1.600-.1 1.600-1.100V4.600h-1.100c-1.400 0-2 .5-2.300 1.700H7z" fill="#444" />
    </g>
  ),

  /* dock icons */
  addBox: <g><rect x="2" y="2" width="17" height="17" fill="#fff" fillOpacity=".4" stroke="#777" strokeWidth="1.500" /><circle cx="19" cy="19" r="4" fill="#a9cfa9" stroke="#3f8045" strokeWidth="1.800" /></g>,
  rmBox: <g><rect x="2" y="2" width="17" height="17" fill="#fff" fillOpacity=".4" stroke="#777" strokeWidth="1.500" /><rect x="14" y="16.500" width="9" height="5.500" rx="1.500" fill="#e33b3f" /><path d="M16 19.200h5" stroke="#fff" strokeWidth="1.500" /></g>,
  filter: <Filter />,
  filterV: <g><Filter /><path d="M17 20h7l-3.500 4z" fill="#444" /></g>,
  collapse: <Tree />,
  expand: <Tree down />,
  info: <g transform="translate(1 1)"><InfoDisc /></g>,
  brush: (
    <g>
      <path d="M1 12c4 0 7 2 9 0l5 4c-2 4-6 6-9 4-3-1-5-4-5-8z" fill="#f5dd6a" />
      <path d="M2 8c3-1 5 0 7 2l5 6c-2 1-4 0-6-1z" fill="#e0593c" /><path d="M4 19c2 0 4-1 6-3l3 2c-3 4-6 5-9 1z" fill="#6b94c4" />
      <path d="M10 11l3-2.500 4 4-3 3.500zM15 9l7-6 1 1.500-6 7z" fill="#f0b65a" stroke="#b98238" strokeWidth=".8" />
    </g>
  ),
  addGroup: (
    <g>
      <path d="M1.500 9v13h13M5.500 6.500v12h13V6.500zM9.500 6v9h12V3" fill="none" stroke="#777" strokeWidth="1.500" />
      <path d="M12 15V5a3 3 0 0 1 3-3v13" fill="none" stroke="#4c78ab" strokeWidth="2" /><circle cx="19" cy="20" r="3.500" fill="#a9cfa9" stroke="#3f8045" strokeWidth="1.800" />
    </g>
  ),
  eye: <g><path d="M0 12Q11-1 23 12 11 22 0 12z" fill="#f4f4f4" stroke="#8b8b8b" strokeWidth="1.500" /><circle cx="12" cy="11" r="5.500" fill="#7295bb" stroke="#46607c" /><circle cx="12" cy="11" r="2.500" fill="#2a3947" /><path d="M17 20h7l-3.500 4z" fill="#444" /></g>,
  epsFilter: <g opacity=".6"><path d="M12 3C8 0 1 2 3 6c1 2 4 2 5 2-4 0-7 2-6 5 1 4 8 4 10 1" fill="none" stroke="#aaa" strokeWidth="2.500" /><path d="M13 12h11l-4 4v6h-4v-6z" fill="#eee" stroke="#bbb" strokeWidth="1.500" /></g>,
  fav: <path d="M12 1l3 8 8.500.3-6.700 5.200 2.500 8.300-7.300-5-7.300 5 2.500-8.300L.5 9.300 9 9z" fill="#fdf066" stroke="#b59a16" strokeWidth="1.300" />,
  home: <g><path d="M1.500 21.500v-17L4 2.500h6l2 2.500h10.500v16.500z" fill="#f4f4f4" stroke="#8c8c8c" strokeWidth="1.600" /><path d="M7 13.500L12 9l5 4.500h-1.500V18h-7v-4.500z" fill="#fff" stroke="#333" strokeWidth="1.500" /></g>,
  drive: <path d="M1.500 21.500v-17L4 2.500h6l2 2.500h10.500v16.500z" fill="#ededed" stroke="#8c8c8c" strokeWidth="1.600" />,
  package: <Package />,
  feather: <Feather />,
  pg: (
    <g>
      <path d="M2 4c3-4 7-3 9-2 4-2 9-1 11 1 2 3 1 8-1 12 2 0 2 2-1 3l-2 0-1 5c-3 2-5 1-5-1l-.5-6-2 2c-5 1-9-9-7.500-14z" fill="#5f8cb9" stroke="#2f526f" strokeWidth="1.500" />
      <path d="M11 2c-2 3-2 7-.5 10M17 4c3 3 1 8 1 13" stroke="#2f526f" fill="none" strokeWidth="1.300" />
    </g>
  ),
};

const Ico = ({ n, small = false }: { n: string; small?: boolean }) => (
  <svg viewBox="0 0 24 24" className={small ? "h-4 w-4 shrink-0" : "h-6 w-6 shrink-0"} fill="none">
    {ICONS[n]}
  </svg>
);

/* ---------- toolbars ---------- */

const ROWS: string[][] = [
  "newDoc open save newLayout layoutMgr style H hand pan zoomIn zoomOut zoomFull zoomSel zoomLayer zoomNative zoomLast zoomNext newMap new3d newBm bm clock refresh H identify abacus gear sigma table V measure V tip runAction v".split(" "),
  "dataSrc gpkg shp spatialite memory mesh virtual H edits pencil saveEdits addPoint vertex v multiEdit del cut copy paste undo redo H abcY pie S abPin abcR S abD abcEye abcMove abcRot abcEdit H globeAdd globeFind metasearch H python H help H".split(" "),
  "ruler curve v movePt v rotF scaleF simplify ring part fillRing delRing delPart reshape offset splitF mergeF sciss1 sciss2 join merge3 rotPt v".split(" "),
  "select V form V desel V selLoc H meshEdit meshSel v meshCalc meshTri v H annoLayer V annoEdit annoPoly annoLine annoStar annoText S annoBalloon V".split(" "),
];

const Handle = () => (
  <svg width="5" height="21" className="shrink-0">
    <path d="M.5.5v20M3.500.5v20" stroke="#b4b4b4" strokeDasharray="1 2" />
  </svg>
);

const Caret = ({ dim }: { dim?: boolean }) => (
  <svg width="8" height="5" className="shrink-0">
    <path d="M.5.5h7L4 4.500z" fill={dim ? "#a0a0a0" : "#4a4a4a"} />
  </svg>
);

const Toolbar = ({ items }: { items: string[] }) => (
  <div className="flex h-[39px] shrink-0 items-center border-b border-[#b8b8b8] bg-linear-to-b from-[#fafafa] to-[#efefef]">
    <div className="flex w-[13px] shrink-0 pl-[5px]"><Handle /></div>
    {items.map((it, i) => {
      if (it === "H") return <div key={i} className="flex w-4 shrink-0 pl-2"><Handle /></div>;
      if (it === "V" || it === "v") return <div key={i} className="flex w-3 shrink-0 pl-px"><Caret dim={it === "v"} /></div>;
      if (it === "S") return <div key={i} className="flex w-[7px] shrink-0 justify-center"><div className="h-5 w-px bg-[#cfcfcf]" /></div>;
      if (it === "hand")
        return (
          <div key={i} className="flex w-[33px] shrink-0">
            <div className="flex h-8 w-8 items-center rounded-xs border border-[#b4b4b4] bg-[#dcdcdc] pl-[4px]"><Ico n={it} /></div>
          </div>
        );
      return <div key={i} className="flex w-[33px] shrink-0 pl-1"><Ico n={it} /></div>;
    })}
  </div>
);

/* ---------- menu ---------- */

const MENU: [string, number, string][] = [
  ["Project", 3, "w-[51px]"],
  ["Edit", 0, "w-[34px]"],
  ["View", 0, "w-[39px]"],
  ["Layer", 0, "w-[42px]"],
  ["Settings", 0, "w-[56px]"],
  ["Plugins", 0, "w-[53px]"],
  ["Vector", 4, "w-[47px]"],
  ["Raster", 0, "w-[46px]"],
  ["Database", 0, "w-[62px]"],
  ["Web", 0, "w-[38px]"],
  ["Mesh", 0, "w-[43px]"],
  ["Processing", 3, "w-[71px]"],
  ["Help", 0, "w-[40px]"],
];

/* ---------- interpolated surface ---------- */

type P = [number, number, number];

const PTS: P[] = [
  [540, 271, 50], [970, 166, 122], [1134, 238, 165], [1173, 408, 60], [1169, 568, 32],
  [939, 253, 22], [839, 284, 44], [710, 330, 60], [720, 380, 34], [1046, 270, 72],
  [1020, 297, 238], [1045, 317, 255], [983, 315, 34], [1003, 326, 28], [1121, 334, 118],
  [1118, 358, 78], [953, 406, 0], [1025, 431, 3], [855, 442, 0], [836, 480, 0],
  [1089, 478, 24], [987, 493, 112], [1010, 503, 182], [903, 526, 92], [895, 554, 54],
  [1042, 528, 130], [1110, 524, 52], [1093, 545, 112], [868, 575, 142], [1000, 572, 108],
  [819, 606, 148], [989, 596, 140], [1003, 602, 118], [1100, 604, 6], [1110, 613, 16],
  [1033, 612, 6], [913, 618, 218], [918, 631, 200], [974, 631, 105], [720, 643, 18],
  [867, 643, 134], [960, 657, 40], [706, 682, 124],
];

function delaunay(p: P[]): [P, P, P][] {
  const out: [P, P, P][] = [];
  for (let i = 0; i < p.length; i++)
    for (let j = i + 1; j < p.length; j++)
      for (let k = j + 1; k < p.length; k++) {
        const [ax, ay] = p[i], [bx, by] = p[j], [cx, cy] = p[k];
        const d = 2 * (ax * (by - cy) + bx * (cy - ay) + cx * (ay - by));
        if (Math.abs(d) < 1) continue;
        const a2 = ax * ax + ay * ay, b2 = bx * bx + by * by, c2 = cx * cx + cy * cy;
        const ux = (a2 * (by - cy) + b2 * (cy - ay) + c2 * (ay - by)) / d;
        const uy = (a2 * (cx - bx) + b2 * (ax - cx) + c2 * (bx - ax)) / d;
        const r2 = (ax - ux) ** 2 + (ay - uy) ** 2;
        if (p.every(([x, y], m) => m === i || m === j || m === k || (x - ux) ** 2 + (y - uy) ** 2 >= r2 - 0.01)) out.push([p[i], p[j], p[k]]);
      }
  return out;
}

/* the breakline 903,526 - 868,575 replaces the diagonal 836,480 - 895,554 */
const at = (x: number, y: number) => PTS.find((q) => q[0] === x && q[1] === y)!;
const west = at(836, 480), low = at(895, 554), north = at(903, 526), south = at(868, 575);
const FACES: [P, P, P][] = [
  ...delaunay(PTS).filter((t) => !(t.includes(west) && t.includes(low))),
  [west, north, south],
  [north, low, south],
];

const TRIS = FACES.map(([a, b, c]) => {
  const det = (b[0] - a[0]) * (c[1] - a[1]) - (c[0] - a[0]) * (b[1] - a[1]);
  const gx = ((b[2] - a[2]) * (c[1] - a[1]) - (c[2] - a[2]) * (b[1] - a[1])) / det;
  const gy = ((c[2] - a[2]) * (b[0] - a[0]) - (b[2] - a[2]) * (c[0] - a[0])) / det;
  const lo = Math.min(a[2], b[2], c[2]), hi = Math.max(a[2], b[2], c[2]);
  const g2 = gx * gx + gy * gy || 1;
  const t0 = (lo - a[2]) / g2, t1 = (hi - a[2]) / g2;
  return {
    pts: [a, b, c].map((q) => `${q[0]},${q[1]}`).join(" "),
    x1: a[0] + gx * t0, y1: a[1] + gy * t0, x2: a[0] + gx * t1, y2: a[1] + gy * t1, lo, hi,
  };
});

const gray = (v: number) => `rgb(${v},${v},${v})`;

const MapCanvas = () => (
  <svg viewBox="434 200 931 499" width="931" height="499" className="block">
    <defs>
      <clipPath id="extent"><rect x="630" y="214" width="492" height="480" /></clipPath>
      {TRIS.map((t, i) => (
        <linearGradient key={i} id={`t${i}`} gradientUnits="userSpaceOnUse" x1={t.x1} y1={t.y1} x2={t.x2} y2={t.y2}>
          <stop offset="0" stopColor={gray(t.lo)} />
          <stop offset="1" stopColor={gray(t.hi)} />
        </linearGradient>
      ))}
    </defs>
    <g clipPath="url(#extent)" shapeRendering="crispEdges">
      {TRIS.map((t, i) => <polygon key={i} points={t.pts} fill={`url(#t${i})`} />)}
    </g>
    {PTS.filter((p) => p[1] > 200).map((p, i) => (
      <circle key={i} cx={p[0]} cy={p[1]} r="3.700" fill="#e8718d" stroke="#35262b" strokeWidth="1.100" />
    ))}
  </svg>
);

/* ---------- docks ---------- */

const DockTitle = ({ title }: { title: string }) => (
  <div className="flex h-5 items-center pl-1 pr-px text-[12px] tracking-[-0.3px]">
    <span className="flex-1">{title}</span>
    <svg width="26" height="12" fill="none" stroke="#666">
      <rect x=".5" y=".5" width="10" height="10" rx="2" />
      <path d="M5 2.500h3.500V6M3 5h3.500v3.500H3z" />
      <rect x="14.500" y=".5" width="10" height="10" rx="2" />
      <path d="M17 3l5 5M22 3l-5 5" strokeWidth="1.800" />
    </svg>
  </div>
);

const Side = ({ open = false }: { open?: boolean }) => (
  <svg width="8" height="8" className="block">
    <path d={open ? "M0 2h8L4 6z" : "M2 0l4 4-4 4z"} fill="#5a5a5a" />
  </svg>
);

const BROWSER: [string, string, boolean][] = [
  ["fav", "Favorites", false],
  ["bm", "Spatial Bookmarks", true],
  ["home", "Home", true],
  ["drive", "C:\\", true],
  ["package", "GeoPackage", false],
  ["feather", "SpatiaLite", false],
  ["pg", "PostgreSQL", false],
];

const RasterIcon = () => (
  <svg width="13" height="13" shapeRendering="crispEdges">
    <rect width="13" height="13" fill="#dfe9f5" />
    <path d="M4 0h5v4H4zM0 5h5v4H0zM9 9h4v4H9zM5 9h4v4H5zM9 4h4v4H9z" fill="#a9c3e6" />
    <path d="M0 0h4v4H0zM9 0h4v4H9zM5 5h4v4H5zM0 9h4v4H0z" fill="#2b3a4f" />
    <path d="M9 9h4v4H9z" fill="#c7d8ee" />
  </svg>
);

const Check = ({ on }: { on?: boolean }) => (
  <svg width="14" height="14" className="block shrink-0">
    <rect x=".5" y=".5" width="13" height="13" fill="#fff" stroke="#b0b0b0" />
    {on && <path d="M3.500 6.500l2.500 4 4.500-8" fill="none" stroke="#000" strokeWidth="2" />}
  </svg>
);

const Sym = ({ k }: { k: string }) => {
  if (k === "raster") return <RasterIcon />;
  if (k === "fill") return <div className="h-4 w-4 border border-[#c99888] bg-[#f5b7a5]" />;
  return (
    <svg width="8" height="8">
      <circle cx="4" cy="4" r="3" fill={k === "pink" ? "#e0708a" : "#cfa92f"} stroke={k === "pink" ? "#8b4a59" : "#6d5b22"} />
    </svg>
  );
};

const LayerRow = ({ name, k, arrow, on, sel }: { name: string; k: string; arrow?: "r" | "d"; on?: boolean; sel?: boolean }) => (
  <div className="flex h-[18px] shrink-0 items-center">
    <div className="flex w-[23px] pl-[6px]">{arrow && <Side open={arrow === "d"} />}</div>
    <Check on={on} />
    <div className="ml-[6px] flex w-4 justify-center"><Sym k={k} /></div>
    <div
      className={
        "ml-[3px] flex h-full flex-1 items-center border pl-[2px] text-[12px] font-bold " +
        (sel ? "border-[#b9dcf2] bg-linear-to-b from-[#f5fafe] to-[#e4f2fc]" : "border-transparent") +
        (on ? " tracking-[-0.5px] text-black" : " tracking-[0.12px] text-[#808080] italic")
      }
    >
      <span className={sel ? "underline" : ""}>{name}</span>
    </div>
  </div>
);

const Field = "flex h-[22px] items-center rounded-[3px] border border-[#adadad] bg-white";

const Spin = () => (
  <div className="flex h-full w-[14px] flex-col items-center justify-center gap-[3px] border-l border-[#c4c4c4]">
    <svg width="8" height="4"><path d="M0 4h8L4 0z" fill="#666" /></svg>
    <svg width="8" height="4"><path d="M0 0h8L4 4z" fill="#666" /></svg>
  </div>
);

export default function App() {
  return (
    <div className="flex h-[728px] w-[1366px] flex-col overflow-hidden bg-[#f0f0f0] font-['Open_Sans','Noto_Sans',sans-serif] text-[12px] leading-none text-black">
      <div className="flex h-[23px] shrink-0 items-center bg-white pl-[2px]">
        <svg width="17" height="17" viewBox="0 0 17 17" fill="none">
          <circle cx="7.500" cy="8" r="5.700" stroke="#84b135" strokeWidth="3.600" />
          <path d="M7.500 7h4l5 6.500-2 3.500L9 11z" fill="#589632" />
          <path d="M7.500 6.500h3l1 3-2 1.500-2-2z" fill="#ee7913" />
          <path d="M11 10l4.500 5" stroke="#fff" strokeWidth=".7" />
        </svg>
        <span className="ml-1 flex-1 text-[12px] tracking-[-0.38px]">*Untitled Project — QGIS</span>
        <svg width="126" height="23" fill="none" stroke="#111" className="mr-[4px]">
          <path d="M8 10.500h10" />
          <path d="M53.500 8.500h7v7h-7zM55.500 8V6.500h7v7H61" />
          <path d="M99.500 5.500l10 10M109.500 5.500l-10 10" strokeWidth="1.100" />
        </svg>
      </div>

      <div className="flex h-5 shrink-0 items-center border-b border-[#dadada] pl-[10px] text-[12px] tracking-[-0.3px]">
        {MENU.map(([t, u, w]) => (
          <span key={t} className={`${w} shrink-0`}>
            {t.slice(0, u)}
            <span className="underline underline-offset-2">{t[u]}</span>
            {t.slice(u + 1)}
          </span>
        ))}
      </div>

      {ROWS.map((r, i) => <Toolbar key={i} items={r} />)}

      <div className="flex h-[501px] shrink-0">
        <div className="flex w-[427px] flex-col">
          <DockTitle title="Browser" />
          <div className="flex h-[30px] items-center gap-[9px] pb-[2px] pl-2">
            {["addBox", "refresh", "filter", "collapse", "info"].map((n) => <Ico key={n} n={n} small />)}
          </div>
          <div className="flex h-[126px] border border-[#b4b4b4] bg-white">
            <div className="flex flex-1 flex-col overflow-hidden pt-px">
              {BROWSER.map(([ic, t, a]) => (
                <div key={t} className="flex h-[18px] shrink-0 items-center">
                  <div className="flex w-[19px] pl-1">{a && <Side />}</div>
                  <Ico n={ic} small />
                  <span className="ml-[6px] tracking-[-0.4px]">{t}</span>
                </div>
              ))}
            </div>
            <div className="-mr-px flex w-[15px] flex-col border-x border-[#b4b4b4] bg-[#e6e6e6]">
              <div className="flex h-[13px] items-center justify-center border-b border-[#b4b4b4] bg-white"><svg width="8" height="4"><path d="M0 4h8L4 0z" fill="#444" /></svg></div>
              <div className="h-[32px] border-b border-[#b4b4b4] bg-white" />
              <div className="mt-auto flex h-[14px] items-center justify-center border-t border-[#b4b4b4] bg-white"><svg width="8" height="4"><path d="M0 0h8L4 4z" fill="#444" /></svg></div>
            </div>
          </div>
          <div className="flex h-[6px] justify-center pt-[2px]"><svg width="17" height="1"><path d="M0 .5h17" stroke="#aaa" strokeDasharray="1 2" /></svg></div>
          <DockTitle title="Layers" />
          <div className="flex h-[30px] items-center gap-[9px] pb-[2px] pl-2">
            {["brush", "addGroup", "eye", "filterV", "epsFilter"].map((n) => <Ico key={n} n={n} small />)}
            <div className="-mr-px -ml-[4px] flex"><Caret dim /></div>
            {["expand", "collapse", "rmBox"].map((n) => <Ico key={n} n={n} small />)}
          </div>
          <div className="flex h-[269px] flex-col border border-[#b4b4b4] bg-white">
            <LayerRow name="data_interpolation_reproject" k="pink" on sel />
            <div className="h-px shrink-0" />
            <LayerRow name="elevation_tin" k="raster" arrow="d" on />
            <div className="flex h-[15px] items-center pl-[43px] tracking-[-0.3px]">Band 1</div>
            <div className="flex h-[98px] pl-[43px] pt-px">
              <div className="h-[95px] w-4 bg-linear-to-b from-white to-black" />
              <div className="flex h-[95px] flex-1 flex-col justify-between pl-[5px] text-[11px] tracking-[-0.1px]">
                <span>836,09131</span>
                <span>7,069377</span>
              </div>
            </div>
            <LayerRow name="S2_Neapel_sm2" k="raster" arrow="r" />
            <LayerRow name="Campania_boundaries" k="fill" />
            <LayerRow name="precipitation_idw_p5_clip" k="raster" arrow="r" />
            <LayerRow name="precipitation_idw_p5" k="raster" arrow="r" />
            <LayerRow name="data_interpolation" k="gold" />
            <LayerRow name="OSM Standard" k="raster" arrow="r" />
          </div>
        </div>
        <div className="flex w-[6px] items-center justify-center"><svg width="1" height="17"><path d="M.5 0v17" stroke="#aaa" strokeDasharray="1 2" /></svg></div>
        <div className="w-[933px] border border-[#b4b4b4] bg-white"><MapCanvas /></div>
      </div>

      <div className="flex h-7 shrink-0 items-center pl-1 text-[11px] tracking-[-0.15px]">
        <div className={`${Field} w-[200px] pl-2 text-[#777]`}>
          <svg width="13" height="13" fill="none" stroke="#888"><circle cx="5.500" cy="5" r="4.300" /><path d="M8.500 8l4 4" strokeWidth="1.300" /></svg>
          <span className="ml-[6px] tracking-[-0.1px]">Type to locate (Ctrl+K)</span>
        </div>
        <span className="ml-[362px] w-[57px] tracking-[-0.25px]">Coordinate</span>
        <div className={`${Field} w-[96px] pl-[6px]`}>427912 4524964</div>
        <svg width="17" height="18" className="ml-[3px]" fill="none" stroke="#333">
          <path d="M2 3l4-1 6 8-4 4-6-7zM4 3l5 8M6 2l5 8M2 6l5-3" strokeWidth="1.200" />
          <circle cx="10" cy="12" r="3.500" fill="#ddd" /><circle cx="10" cy="12" r="1.200" /><path d="M10 4l5-2M12 7l3-2" strokeDasharray="1.500 1" />
        </svg>
        <span className="ml-[12px] w-[29px]">Scale</span>
        <div className={`${Field} w-[81px] pl-1`}>
          <span className="flex-1">1:262556</span>
          <div className="flex h-full w-5 items-center justify-center border-l border-[#c4c4c4]"><Caret /></div>
        </div>
        <svg width="13" height="16" className="ml-[12px]"><path d="M3 8V5a3.500 3.500 0 0 1 7 0v3" fill="none" stroke="#888" strokeWidth="1.800" /><rect x=".5" y="7" width="12" height="8.500" rx="1" fill="#5f5f5f" /></svg>
        <span className="ml-[7px] w-[48px] tracking-[-0.45px]">Magnifier</span>
        <div className={`${Field} w-[84px] pl-[5px]`}><span className="flex-1">100%</span><Spin /></div>
        <span className="ml-[8px] w-[51px] tracking-[-0.25px]">Rotation</span>
        <div className={`${Field} w-[84px] pl-[4px]`}><span className="flex-1">0,0 °</span><Spin /></div>
        <div className="ml-[6px]"><Check on /></div>
        <span className="ml-1 w-[52px] tracking-[-0.25px]">Render</span>
        <svg width="14" height="14" fill="none" stroke="#eee" strokeWidth=".6"><ellipse cx="7" cy="7" rx="7" ry="5.800" fill="#5c5c5c" stroke="none" /><path d="M0 7h14M1 4.500h12M1 9.500h12M7 1v12M4.500 1.500q-2.500 5.500 0 11M9.500 1.500q2.500 5.500 0 11" /></svg>
        <span className="ml-[2px] flex-1">EPSG:32633</span>
        <svg width="17" height="15" className="mr-[6px]"><path d="M8.500 0C13 0 16.500 2.500 16.500 6c0 2-1 3.500-2.500 4.500l1.500 4-5-2.800C5 12.300.5 10 .5 6 .5 2.500 4 0 8.500 0z" fill="#5c5c5c" /></svg>
      </div>
    </div>
  );
}
